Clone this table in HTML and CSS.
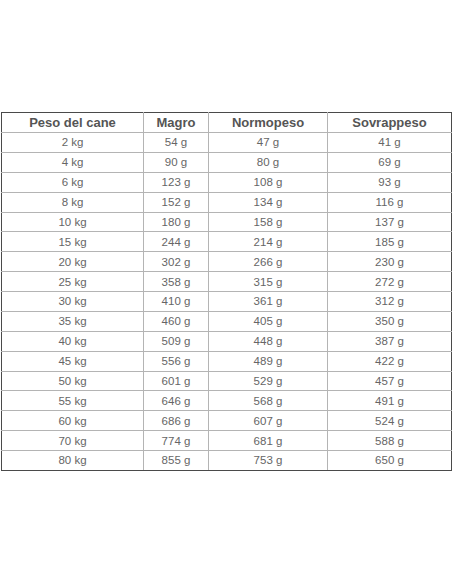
FILE: index.html
```html
<!DOCTYPE html>
<html lang="it">
<head>
<meta charset="utf-8">
<title>Tabella razioni</title>
<link rel="stylesheet" href="styles.css">
</head>
<body>
<div class="page">
<table class="ration">
<colgroup>
<col class="c1"><col class="c2"><col class="c3"><col class="c4">
</colgroup>
<thead>
<tr><th>Peso del cane</th><th>Magro</th><th>Normopeso</th><th>Sovrappeso</th></tr>
</thead>
<tbody>
<tr><td>2 kg</td><td>54 g</td><td>47 g</td><td>41 g</td></tr>
<tr><td>4 kg</td><td>90 g</td><td>80 g</td><td>69 g</td></tr>
<tr><td>6 kg</td><td>123 g</td><td>108 g</td><td>93 g</td></tr>
<tr><td>8 kg</td><td>152 g</td><td>134 g</td><td>116 g</td></tr>
<tr><td>10 kg</td><td>180 g</td><td>158 g</td><td>137 g</td></tr>
<tr><td>15 kg</td><td>244 g</td><td>214 g</td><td>185 g</td></tr>
<tr><td>20 kg</td><td>302 g</td><td>266 g</td><td>230 g</td></tr>
<tr><td>25 kg</td><td>358 g</td><td>315 g</td><td>272 g</td></tr>
<tr><td>30 kg</td><td>410 g</td><td>361 g</td><td>312 g</td></tr>
<tr><td>35 kg</td><td>460 g</td><td>405 g</td><td>350 g</td></tr>
<tr><td>40 kg</td><td>509 g</td><td>448 g</td><td>387 g</td></tr>
<tr><td>45 kg</td><td>556 g</td><td>489 g</td><td>422 g</td></tr>
<tr><td>50 kg</td><td>601 g</td><td>529 g</td><td>457 g</td></tr>
<tr><td>55 kg</td><td>646 g</td><td>568 g</td><td>491 g</td></tr>
<tr><td>60 kg</td><td>686 g</td><td>607 g</td><td>524 g</td></tr>
<tr><td>70 kg</td><td>774 g</td><td>681 g</td><td>588 g</td></tr>
<tr><td>80 kg</td><td>855 g</td><td>753 g</td><td>650 g</td></tr>
</tbody>
</table>
</div>
</body>
</html>
```
FILE: styles.css
```css
html, body {
  margin: 0;
  padding: 0;
  background: #ffffff;
}
.page {
  padding: 112px 1px 0 1px;
}
.ration {
  border-collapse: collapse;
  table-layout: fixed;
  width: 450px;
  font-family: "Liberation Sans", Arial, sans-serif;
  border: 1px solid #4a4a4a;
}
.c1 { width: 142px; }
.c2 { width: 65px; }
.c3 { width: 119px; }
.c4 { width: 124px; }
.ration th,
.ration td {
  border: 1px solid #b4b4b4;
  padding: 0;
  text-align: center;
  vertical-align: middle;
  line-height: 16px;
}
.ration th {
  height: 19px;
  font-size: 13px;
  font-weight: bold;
  color: #555555;
}
.ration td {
  height: 18.88px;
  font-size: 11.5px;
  color: #666666;
}
.ration tr > :first-child { border-left-color: #4a4a4a; }
.ration tr > :last-child { border-right-color: #4a4a4a; }
.ration thead th { border-top-color: #4a4a4a; }
.ration tbody tr:last-child td { border-bottom-color: #4a4a4a; }
```
